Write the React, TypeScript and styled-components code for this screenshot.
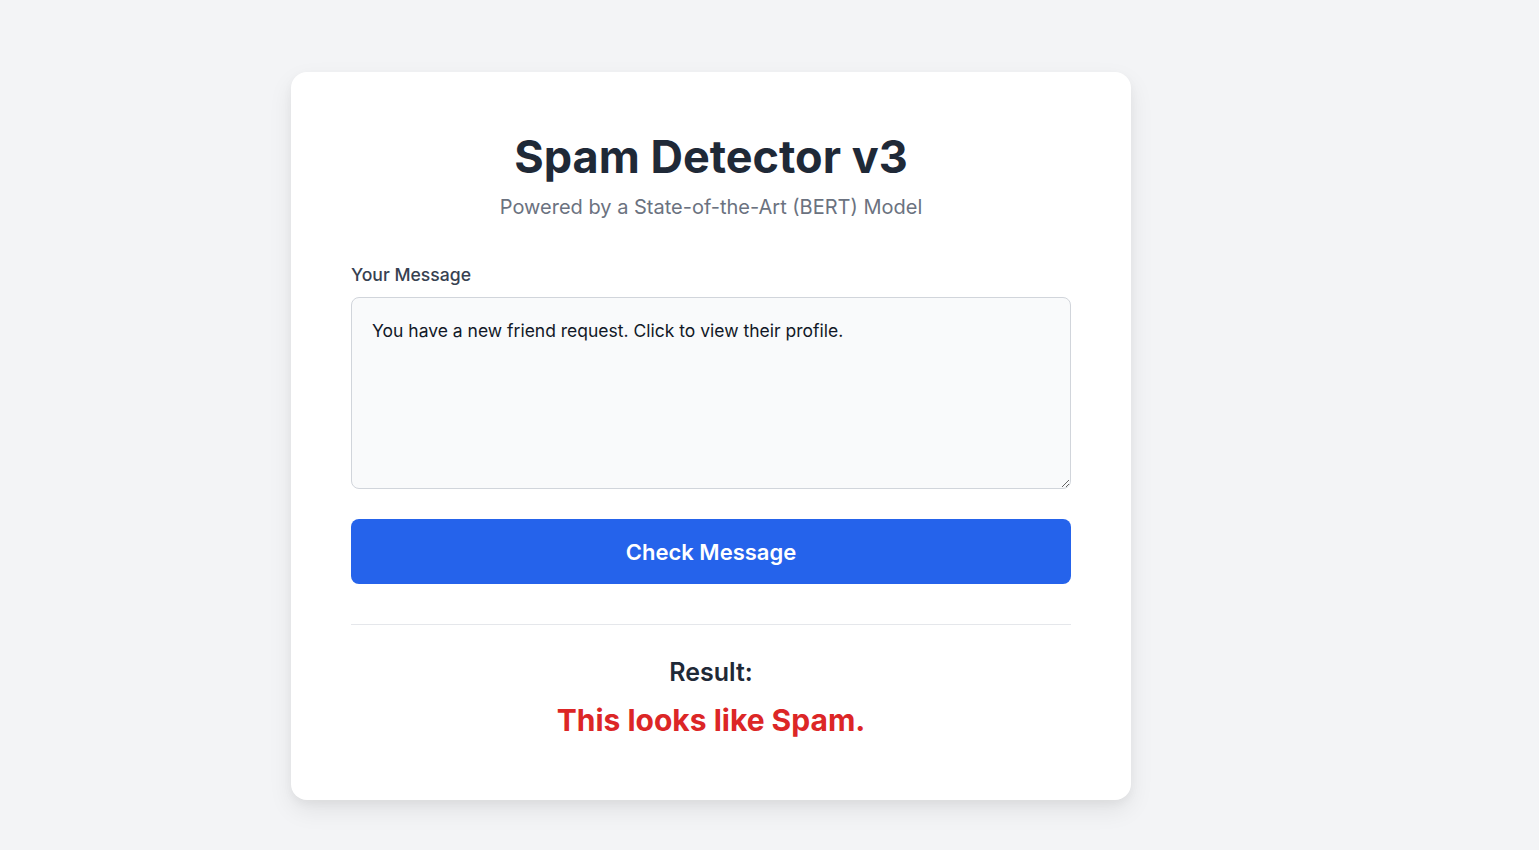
import React, { useState } from "react";
import styled, { createGlobalStyle } from "styled-components";

const Global = createGlobalStyle`
  html, body { margin: 0; padding: 0; background: #f3f4f6; }
  body { font-family: Inter, "Noto Sans", sans-serif; -webkit-font-smoothing: antialiased; }
  * { box-sizing: border-box; }
`;

const Page = styled.div`
  min-height: 850px;
  padding: 72px 0 40px 291px;
  display: flex;
  align-items: flex-start;
`;

const Card = styled.main`
  width: 840px;
  background: #ffffff;
  border-radius: 16px;
  box-shadow: 0 10px 25px rgba(0, 0, 0, 0.08), 0 4px 10px rgba(0, 0, 0, 0.04);
  padding: 58px 60px 62px;
  display: flex;
  flex-direction: column;
`;

const Header = styled.header`
  text-align: center;
  margin-bottom: 43px;
`;

const Title = styled.h1`
  margin: 0;
  font-size: 45px;
  font-weight: 700;
  color: #1f2937;
  line-height: 54px;
`;

const Subtitle = styled.p`
  margin: 9px 0 0;
  font-size: 20px;
  color: #6b7280;
  line-height: 28px;
`;

const Label = styled.label`
  display: block;
  font-size: 17.6px;
  font-weight: 500;
  color: #374151;
  line-height: 21px;
  margin-bottom: 12px;
`;

const TextArea = styled.textarea`
  width: 100%;
  height: 192px;
  padding: 20px;
  font-family: Inter, "Noto Sans", sans-serif;
  font-size: 17.5px;
  line-height: 1.5;
  color: #111827;
  background: #f9fafb;
  border: 1px solid #d1d5db;
  border-radius: 8px;
  resize: vertical;
  outline: none;
  display: block;
`;

const Button = styled.button`
  margin-top: 30px;
  width: 100%;
  height: 65px;
  border: none;
  border-radius: 8px;
  background: #2563eb;
  color: #ffffff;
  font-family: Inter, "Noto Sans", sans-serif;
  font-size: 22px;
  font-weight: 600;
  cursor: pointer;
`;

const Divider = styled.hr`
  border: none;
  border-top: 1px solid #e5e7eb;
  margin: 40px 0 0;
`;

const Result = styled.section`
  text-align: center;
  padding-top: 32px;
`;

const ResultLabel = styled.h2`
  margin: 0;
  font-size: 25px;
  font-weight: 600;
  color: #1f2937;
  line-height: 30px;
`;

const Verdict = styled.p<{ $spam: boolean }>`
  margin: 15px 0 0;
  font-size: 30px;
  font-weight: 700;
  color: ${(p) => (p.$spam ? "#dc2626" : "#16a34a")};
  line-height: 36px;
`;

export default function App() {
  const [msg, setMsg] = useState(
    "You have a new friend request. Click to view their profile."
  );
  return (
    <>
      <Global />
      <Page>
        <Card>
          <Header>
            <Title>Spam Detector v3</Title>
            <Subtitle>Powered by a State-of-the-Art (BERT) Model</Subtitle>
          </Header>
          <Label htmlFor="msg">Your Message</Label>
          <TextArea id="msg" value={msg} onChange={(e) => setMsg(e.target.value)} />
          <Button>Check Message</Button>
          <Divider />
          <Result>
            <ResultLabel>Result:</ResultLabel>
            <Verdict $spam>This looks like Spam.</Verdict>
          </Result>
        </Card>
      </Page>
    </>
  );
}
